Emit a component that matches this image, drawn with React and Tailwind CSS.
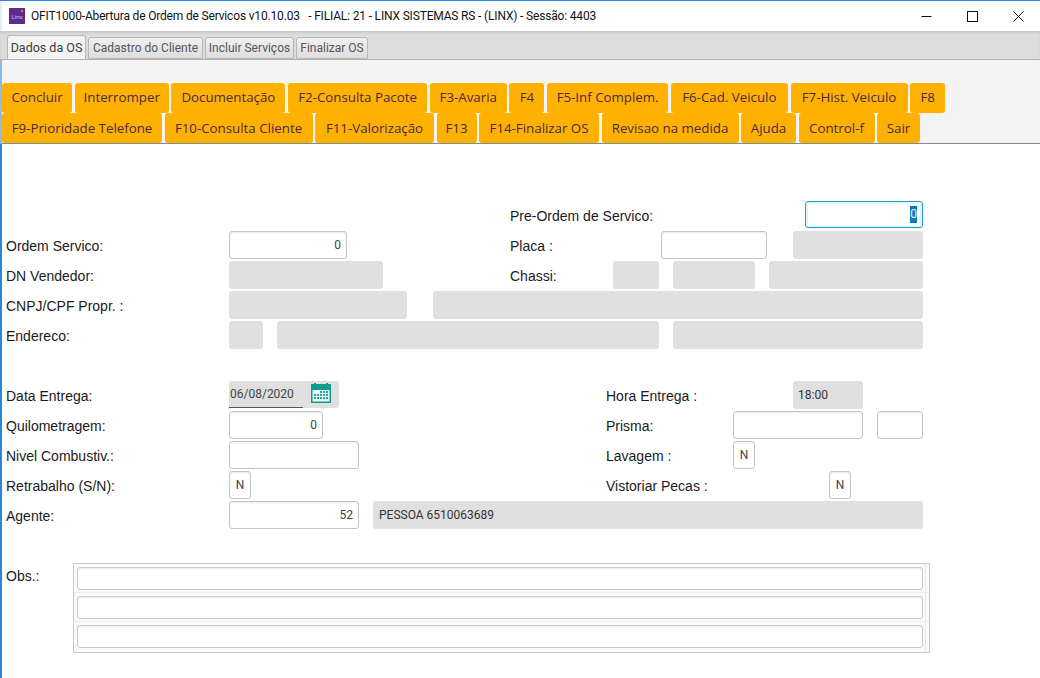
function Btn({ w, children, low }) {
  return <button className={`${w} ${low ? 'pt-[2px]' : ''} h-full shrink-0 bg-[#ffb100] rounded-[3px] text-[13.3px] text-[#4a2a4a] text-center whitespace-nowrap`}>{children}</button>;
}
function Tab({ w, active, children }) {
  return (
    <div className={active
      ? `${w} h-[24px] border border-b-0 border-[#b8b8b8] bg-[#f4f4f4] rounded-t-[3px] text-[#3c3c3c] text-center leading-[23px] text-[12.5px] whitespace-nowrap font-['Roboto',sans-serif]`
      : `${w} h-[22px] border border-[#b8b8b8] bg-gradient-to-b from-[#f0f0f0] to-[#dedede] rounded-t-[3px] text-[#555] text-center leading-[21px] text-[12px] whitespace-nowrap font-['Roboto',sans-serif]`}>{children}</div>
  );
}
function Label({ w, children }) {
  return <div className={`${w} shrink-0 text-[14px] text-[#1a1a1a] leading-[30px] whitespace-nowrap font-['Liberation_Sans',Arial,sans-serif]`}>{children}</div>;
}
function Input({ w, ml, children, center }) {
  return <div className={`${w} ${ml} shrink-0 h-[28px] bg-white border border-[#c4c4c4] rounded-[3px] shadow-[inset_0_1px_2px_rgba(0,0,0,0.08)] text-[12px] text-[#444] leading-[26px] font-['Roboto',sans-serif] ${center ? 'text-center' : 'text-right pr-[5px]'}`}>{children}</div>;
}
function Grey({ w, ml, children }) {
  return <div className={`${w} ${ml} shrink-0 h-[28px] bg-[#e0e0e0] rounded-[3px] text-[12px] text-[#333] leading-[28px] font-['Roboto',sans-serif]`}>{children}</div>;
}
function Row({ children, mb }) {
  return <div className={`flex h-[28px] ${mb || 'mb-[2px]'}`}>{children}</div>;
}
function Cal() {
  return (
    <svg width="20" height="20" viewBox="0 0 20 20" className="ml-[8px] mt-[2px] shrink-0">
      <rect x="0.75" y="2" width="18.5" height="17.25" fill="#eef7f5" stroke="#0f9b8e" strokeWidth="1.5" />
      <rect x="0" y="1" width="20" height="6" fill="#0f9b8e" />
      <rect x="3" y="0" width="2" height="2" fill="#0f9b8e" />
      <rect x="15" y="0" width="2" height="2" fill="#0f9b8e" />
      {[8, 11, 14].map(y => [3, 6, 9, 12, 15].map(x => <rect key={x + '-' + y} x={x} y={y} width="2" height="2" fill={y === 8 && x < 9 ? '#eef7f5' : '#2aa79b'} />))}
    </svg>
  );
}
function ObsRow({ last }) {
  return (
    <div className={`flex ${last ? 'h-[30px]' : 'h-[29px] border-b border-[#ececec]'}`}>
      <div className="flex-1 pl-[3px] pr-[2px] pt-[3px]">
        <div className="h-[23px] bg-white border border-[#c8c8c8] rounded-[3px] shadow-[inset_0_1px_2px_rgba(0,0,0,0.08)]" />
      </div>
      <div className="w-[4px] border-l border-[#e8e8e8]" />
    </div>
  );
}
export default function App() {
  return (
    <div className="w-[1040px] h-[678px] overflow-hidden bg-white font-['Open_Sans',sans-serif] border-t border-[#2a86d8] flex flex-col">
      <div className="h-[30px] shrink-0 bg-white border-l-2 border-[#e4eef8] flex items-center pl-[7px]">
        <div className="w-[16px] h-[16px] bg-[#5f2a8e] text-[6px] text-[#d9c8ee] leading-[19px] text-center shrink-0 relative">
          Linx
          <span className="absolute right-[2px] top-[2px] w-[2px] h-[2px] bg-[#f0703a]" />
        </div>
        <div className="ml-[6px] text-[12px] tracking-[-0.17px] text-[#111] whitespace-pre font-['Roboto',sans-serif]">OFIT1000-Abertura de Ordem de Servicos v10.10.03   - FILIAL: 21 - LINX SISTEMAS RS - (LINX) - Sessão: 4403</div>
        <div className="ml-auto flex items-center pr-[16px] gap-[35px]">
          <svg width="11" height="11" viewBox="0 0 11 11"><path d="M0.5 5.5H10.5" stroke="#111" /></svg>
          <svg width="11" height="11" viewBox="0 0 11 11"><rect x="0.5" y="0.5" width="10" height="10" fill="none" stroke="#111" /></svg>
          <svg width="11" height="11" viewBox="0 0 11 11"><path d="M0.5 0.5L10.5 10.5M10.5 0.5L0.5 10.5" stroke="#111" /></svg>
        </div>
      </div>
      <div className="h-[29px] shrink-0 bg-[#dcdcdc] border-b border-[#b0b0b0] flex items-end pl-[7px] gap-[2px] shadow-[inset_0_2px_2px_rgba(0,0,0,0.08)]">
        <Tab w="w-[79px]" active>Dados da OS</Tab>
        <Tab w="w-[115px]">Cadastro do Cliente</Tab>
        <Tab w="w-[89px]">Incluir Serviços</Tab>
        <Tab w="w-[72px]">Finalizar OS</Tab>
      </div>
      <div className="h-[84px] shrink-0 bg-[#f4f4f4] border-b border-[#7f8b96] border-l-2 border-l-[#8fbbe4] pt-[23px]">
        <div className="flex h-[30px] gap-[2.7px]">
          <Btn w="w-[70px]">Concluir</Btn>
          <Btn w="w-[94px]">Interromper</Btn>
          <Btn w="w-[114px]">Documentação</Btn>
          <Btn w="w-[139px]">F2-Consulta Pacote</Btn>
          <Btn w="w-[77px]">F3-Avaria</Btn>
          <Btn w="w-[35px]">F4</Btn>
          <Btn w="w-[121px]">F5-Inf Complem.</Btn>
          <Btn w="w-[117px]">F6-Cad. Veiculo</Btn>
          <Btn w="w-[117px]">F7-Hist. Veiculo</Btn>
          <Btn w="w-[35px]">F8</Btn>
        </div>
        <div className="flex h-[30px] gap-[2.5px]">
          <Btn low w="w-[160px]">F9-Prioridade Telefone</Btn>
          <Btn low w="w-[148px]">F10-Consulta Cliente</Btn>
          <Btn low w="w-[119px]">F11-Valorização</Btn>
          <Btn low w="w-[40px]">F13</Btn>
          <Btn low w="w-[120px]">F14-Finalizar OS</Btn>
          <Btn low w="w-[137px]">Revisao na medida</Btn>
          <Btn low w="w-[55px]">Ajuda</Btn>
          <Btn low w="w-[76px]">Control-f</Btn>
          <Btn low w="w-[43px]">Sair</Btn>
        </div>
      </div>
      <div className="flex-1 border-l-2 border-[#2a86d8] pl-[4px] pt-[57px]">
        <Row>
          <Label w="w-[504px]" />
          <Label w="w-[295px]">Pre-Ordem de Servico:</Label>
          <div className="w-[118px] h-[27px] bg-white border-[1.5px] border-[#18a0d8] rounded-[3px] shadow-[inset_0_0_0_2px_#e6f3fa] flex justify-end items-center pr-[5px] text-[12px] text-[#dff] font-['Roboto',sans-serif]">
            <span className="w-[7px] h-[17px] bg-[#0a78c0] leading-[17px] text-center">0</span>
          </div>
        </Row>
        <Row>
          <Label w="w-[223px]">Ordem Servico:</Label>
          <Input w="w-[118px]">0</Input>
          <Label w="w-[314px] pl-[163px]">Placa :</Label>
          <Input w="w-[106px]" />
          <Grey w="w-[130px]" ml="ml-[26px]" />
        </Row>
        <Row>
          <Label w="w-[223px]">DN Vendedor:</Label>
          <Grey w="w-[154px]" />
          <Label w="w-[230px] pl-[127px]">Chassi:</Label>
          <Grey w="w-[46px]" />
          <Grey w="w-[82px]" ml="ml-[14px]" />
          <Grey w="w-[154px]" ml="ml-[14px]" />
        </Row>
        <Row>
          <Label w="w-[223px]">CNPJ/CPF Propr. :</Label>
          <Grey w="w-[178px]" />
          <Grey w="w-[490px]" ml="ml-[26px]" />
        </Row>
        <Row mb="mb-[32px]">
          <Label w="w-[223px]">Endereco:</Label>
          <Grey w="w-[34px]" />
          <Grey w="w-[382px]" ml="ml-[14px]" />
          <Grey w="w-[250px]" ml="ml-[14px]" />
        </Row>
        <Row>
          <Label w="w-[223px]">Data Entrega:</Label>
          <div className="w-[110px] h-[27px] shrink-0 bg-[#e0e0e0] rounded-[3px] flex">
            <div className="w-[74px] h-[27px] border-b border-[#555] text-[12px] text-[#444] leading-[26px] pl-[1px] shrink-0 font-['Roboto',sans-serif]">06/08/2020</div>
            <Cal />
          </div>
          <Label w="w-[454px] pl-[267px]">Hora Entrega :</Label>
          <Grey w="w-[70px]"><span className="pl-[5px]">18:00</span></Grey>
        </Row>
        <Row>
          <Label w="w-[223px]">Quilometragem:</Label>
          <Input w="w-[94px]">0</Input>
          <Label w="w-[410px] pl-[283px]">Prisma:</Label>
          <Input w="w-[130px]" />
          <Input w="w-[46px]" ml="ml-[14px]" />
        </Row>
        <Row>
          <Label w="w-[223px]">Nivel Combustiv.:</Label>
          <Input w="w-[130px]" />
          <Label w="w-[374px] pl-[247px]">Lavagem :</Label>
          <Input w="w-[22px]" center>N</Input>
        </Row>
        <Row>
          <Label w="w-[223px]">Retrabalho (S/N):</Label>
          <Input w="w-[22px]" center>N</Input>
          <Label w="w-[578px] pl-[355px]">Vistoriar Pecas :</Label>
          <Input w="w-[22px]" center>N</Input>
        </Row>
        <Row mb="mb-[34px]">
          <Label w="w-[223px]">Agente:</Label>
          <Input w="w-[130px]">52</Input>
          <Grey w="w-[550px]" ml="ml-[14px]"><span className="pl-[6px]">PESSOA 6510063689</span></Grey>
        </Row>
        <div className="flex">
          <Label w="w-[67px] -mt-[2px]">Obs.:</Label>
          <div className="w-[857px] h-[90px] border border-[#c8c8c8] bg-[#fafafa]">
            <ObsRow />
            <ObsRow />
            <ObsRow last />
          </div>
        </div>
      </div>
    </div>
  );
}
